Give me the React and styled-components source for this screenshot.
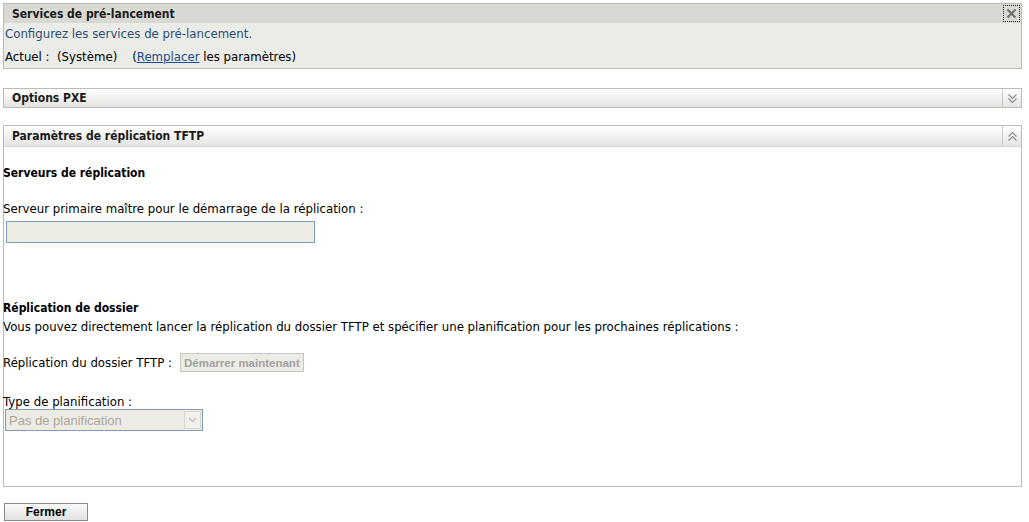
import React from "react";
import styled, { createGlobalStyle, css } from "styled-components";

const GlobalStyle = createGlobalStyle`
  html, body { margin: 0; padding: 0; background: #fff; }
  body {
    font-family: "DejaVu Sans", sans-serif;
    font-size: 11.75px;
    color: #000;
  }
  * { box-sizing: border-box; }
`;

const Page = styled.div`
  width: 1029px;
  height: 522px;
  padding: 3px 7px 0 3px;
  display: flex;
  flex-direction: column;
`;

const Panel = styled.div`
  border: 1px solid #bcbcb7;
  display: flex;
  flex-direction: column;
  ${({ gap }) => gap && css`margin-top: ${gap}px;`}
`;

const Header = styled.div`
  height: ${({ h }) => h || 18}px;
  display: flex;
  align-items: center;
  justify-content: space-between;
  background: ${({ flat }) =>
    flat ? "#d8d9d3" : "linear-gradient(#ffffff, #e4e4e2)"};
  ${({ divided }) => divided && css`border-bottom: 1px solid #d4d4d0;`}
`;

const HeaderTitle = styled.h2`
  margin: 0 0 0 8px;
  font-family: "DejaVu Sans Condensed", "DejaVu Sans", sans-serif;
  font-size: 12px;
  font-weight: bold;
  color: #1a1a1a;
`;

const CloseBox = styled.div`
  width: 17px;
  height: 17px;
  margin-right: 1px;
  border: 1px dotted #222;
  display: flex;
  align-items: center;
  justify-content: center;
`;

const ToggleCell = styled.div`
  width: 19px;
  height: 100%;
  border-left: 1px solid #c8c8c4;
  display: flex;
  align-items: center;
  justify-content: center;
`;

const GrayBody = styled.div`
  background: #ebebe8;
  padding: 4px 1px 3px 1px;
  display: flex;
  flex-direction: column;
  gap: 8px;
`;

const Intro = styled.p`
  margin: 0;
  color: #2a4f75;
  line-height: 15px;
`;

const Line = styled.p`
  margin: 0;
  line-height: 15px;
  white-space: pre;
`;

const Link = styled.a`
  color: #1a4d8f;
  text-decoration: underline;
`;

const WhiteBody = styled.div`
  height: 339px;
  display: flex;
  flex-direction: column;
`;

const SectionTitle = styled.h3`
  margin: ${({ top }) => top}px 0 0 -1px;
  font-family: "DejaVu Sans Condensed", "DejaVu Sans", sans-serif;
  font-size: 12px;
  font-weight: bold;
  line-height: 15px;
`;

const Text = styled.p`
  margin: ${({ top }) => top || 0}px 0 0 -1px;
  line-height: 15px;
`;

const Field = styled.div`
  width: 309px;
  height: 22px;
  margin: 4px 0 0 2px;
  background: #ecebe4;
  border: 1px solid #7f9db9;
`;

const Row = styled.div`
  display: flex;
  align-items: center;
  gap: 8px;
  margin: 18px 0 0 -1px;
`;

const SmallButton = styled.button`
  font-family: "Liberation Sans", Arial, sans-serif;
  font-size: 11.5px;
  font-weight: bold;
  color: #a2a2a2;
  background: #ecebe6;
  border: 1px solid #c4c4c0;
  height: 19px;
  padding: 0 3px;
  line-height: 16px;
`;

const Select = styled.div`
  width: 198px;
  height: 22px;
  margin: -1px 0 0 1px;
  background: #ecebe4;
  border: 1px solid #7f9db9;
  display: flex;
  align-items: center;
  justify-content: space-between;
  padding: 0 1px 0 3px;
  font-family: "Liberation Sans", Arial, sans-serif;
  font-size: 13px;
  color: #aca899;
`;

const SelectArrow = styled.div`
  width: 17px;
  height: 18px;
  border: 1px solid #d8d7d0;
  background: #f2f1ec;
  display: flex;
  align-items: center;
  justify-content: center;
`;

const Footer = styled.div`
  margin-top: 16px;
  padding-left: 1px;
`;

const CloseButton = styled.button`
  width: 84px;
  height: 18px;
  font-family: "Liberation Sans", Arial, sans-serif;
  font-size: 12px;
  font-weight: bold;
  color: #000;
  background: linear-gradient(#fafafa, #e0e0e0);
  border: 1px solid #8a8a8a;
  padding: 0;
`;

const Chevrons = ({ up }) => (
  <svg width="11" height="11" viewBox="0 0 11 11">
    <g fill="none" stroke="#8d8d8d" strokeWidth="1.2">
      {up ? (
        <>
          <path d="M1.5 5.5 L5.5 1.5 L9.5 5.5" />
          <path d="M1.5 9.5 L5.5 5.5 L9.5 9.5" />
        </>
      ) : (
        <>
          <path d="M1.5 1.5 L5.5 5.5 L9.5 1.5" />
          <path d="M1.5 5.5 L5.5 9.5 L9.5 5.5" />
        </>
      )}
    </g>
  </svg>
);

export default function App() {
  return (
    <>
      <GlobalStyle />
      <Page>
        <Panel>
          <Header flat h={19}>
            <HeaderTitle>Services de pré-lancement</HeaderTitle>
            <CloseBox>
              <svg width="11" height="11" viewBox="0 0 11 11">
                <path d="M1.5 1.5 L9.5 9.5 M9.5 1.5 L1.5 9.5" stroke="#6d6d6d" strokeWidth="2" />
              </svg>
            </CloseBox>
          </Header>
          <GrayBody>
            <Intro>Configurez les services de pré-lancement.</Intro>
            <Line>
              {"Actuel :  (Système)    ("}
              <Link href="#">Remplacer</Link>
              {" les paramètres)"}
            </Line>
          </GrayBody>
        </Panel>

        <Panel gap={19}>
          <Header>
            <HeaderTitle>Options PXE</HeaderTitle>
            <ToggleCell><Chevrons /></ToggleCell>
          </Header>
        </Panel>

        <Panel gap={17}>
          <Header h={21} divided>
            <HeaderTitle>Paramètres de réplication TFTP</HeaderTitle>
            <ToggleCell><Chevrons up /></ToggleCell>
          </Header>
          <WhiteBody>
            <SectionTitle top={19}>Serveurs de réplication</SectionTitle>
            <Text top={21}>Serveur primaire maître pour le démarrage de la réplication :</Text>
            <Field />
            <SectionTitle top={58}>Réplication de dossier</SectionTitle>
            <Text top={4}>
              Vous pouvez directement lancer la réplication du dossier TFTP et spécifier une planification pour les prochaines réplications :
            </Text>
            <Row>
              <span>Réplication du dossier TFTP :</span>
              <SmallButton disabled>Démarrer maintenant</SmallButton>
            </Row>
            <Text top={23}>Type de planification :</Text>
            <Select>
              <span>Pas de planification</span>
              <SelectArrow>
                <svg width="9" height="6" viewBox="0 0 9 6">
                  <path d="M1 1 L4.5 4.5 L8 1" fill="none" stroke="#c4c4bc" strokeWidth="1.5" />
                </svg>
              </SelectArrow>
            </Select>
          </WhiteBody>
        </Panel>

        <Footer>
          <CloseButton>Fermer</CloseButton>
        </Footer>
      </Page>
    </>
  );
}
